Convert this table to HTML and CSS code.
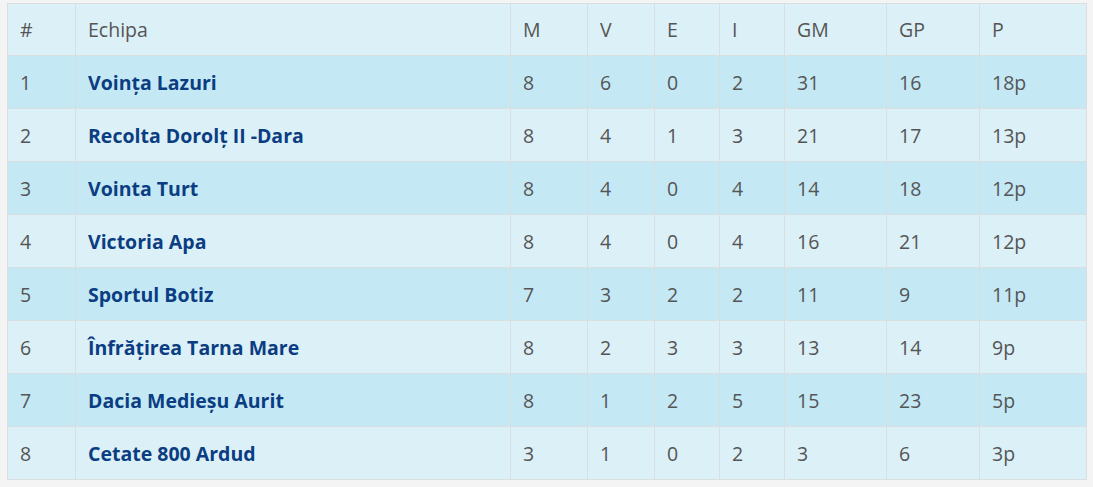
FILE: index.html
```html
<!DOCTYPE html>
<html lang="ro">
<head>
<meta charset="utf-8">
<link rel="stylesheet" href="styles.css">
</head>
<body>
<div class="wrap">
<table class="standings">
  <colgroup>
    <col class="c-pos"><col class="c-team"><col class="c-m"><col class="c-v"><col class="c-e"><col class="c-i"><col class="c-gm"><col class="c-gp"><col class="c-p">
  </colgroup>
  <thead>
    <tr><th>#</th><th>Echipa</th><th>M</th><th>V</th><th>E</th><th>I</th><th>GM</th><th>GP</th><th>P</th></tr>
  </thead>
  <tbody>
    <tr><td>1</td><td class="team">Voința Lazuri</td><td>8</td><td>6</td><td>0</td><td>2</td><td>31</td><td>16</td><td>18p</td></tr>
    <tr><td>2</td><td class="team">Recolta Dorolț II -Dara</td><td>8</td><td>4</td><td>1</td><td>3</td><td>21</td><td>17</td><td>13p</td></tr>
    <tr><td>3</td><td class="team">Vointa Turt</td><td>8</td><td>4</td><td>0</td><td>4</td><td>14</td><td>18</td><td>12p</td></tr>
    <tr><td>4</td><td class="team">Victoria Apa</td><td>8</td><td>4</td><td>0</td><td>4</td><td>16</td><td>21</td><td>12p</td></tr>
    <tr><td>5</td><td class="team">Sportul Botiz</td><td>7</td><td>3</td><td>2</td><td>2</td><td>11</td><td>9</td><td>11p</td></tr>
    <tr><td>6</td><td class="team">Înfrățirea Tarna Mare</td><td>8</td><td>2</td><td>3</td><td>3</td><td>13</td><td>14</td><td>9p</td></tr>
    <tr><td>7</td><td class="team">Dacia Medieșu Aurit</td><td>8</td><td>1</td><td>2</td><td>5</td><td>15</td><td>23</td><td>5p</td></tr>
    <tr><td>8</td><td class="team">Cetate 800 Ardud</td><td>3</td><td>1</td><td>0</td><td>2</td><td>3</td><td>6</td><td>3p</td></tr>
  </tbody>
</table>
</div>
</body>
</html>
```
FILE: styles.css
```css
html, body {
  margin: 0;
  padding: 0;
  background: #f4f4f4;
}
.wrap {
  padding: 3px 7px 0 7px;
}
.standings {
  border-collapse: collapse;
  table-layout: fixed;
  width: 1079px;
  font-family: "Open Sans", "Noto Sans", sans-serif;
  font-size: 19.5px;
  color: #555;
}
.c-pos { width: 68px; }
.c-team { width: 435px; }
.c-m { width: 77px; }
.c-v { width: 67px; }
.c-e { width: 65px; }
.c-i { width: 65px; }
.c-gm { width: 102px; }
.c-gp { width: 93px; }
.c-p { width: 107px; }
.standings th,
.standings td {
  border: 1px solid #d9dfe1;
  padding: 0 12px 0 12px;
  height: 52px;
  text-align: left;
  font-weight: normal;
  vertical-align: middle;
}
.standings th {
  height: 51px;
}
.standings thead tr,
.standings tbody tr:nth-child(even) {
  background: #dcf0f7;
}
.standings tbody tr:nth-child(odd) {
  background: #c4e9f5;
}
.standings td.team {
  font-weight: bold;
  color: #0b3d82;
}
```
